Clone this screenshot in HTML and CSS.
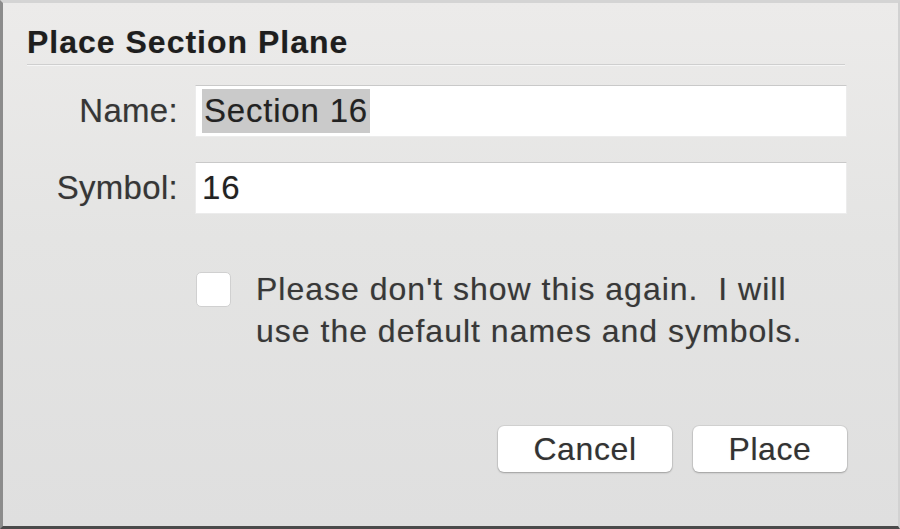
FILE: index.html
```html
<!DOCTYPE html>
<html lang="en">
<head>
  <meta charset="UTF-8">
  <title>Place Section Plane</title>
  <link rel="stylesheet" href="styles.css">
</head>
<body>

  <div class="dialog">
    <h1 class="title">Place Section Plane</h1>

    <!-- Name / Symbol fields -->
    <div class="fields">
      <label class="label">Name:</label>
      <div class="field"><span class="selected">Section 16</span></div>

      <label class="label">Symbol:</label>
      <div class="field">16</div>
    </div>

    <div class="check-row">
      <span class="checkbox"></span>
      <p class="check-text">Please don't show this again.&nbsp; I will<br>use the default names and symbols.</p>
    </div>

    <div class="buttons">
      <button class="btn btn-cancel">Cancel</button>
      <button class="btn btn-place">Place</button>
    </div>
  </div>

</body>
</html>
```

FILE: styles.css
```css
body {
  margin: 0;
  font-family: "Liberation Sans", Arial, sans-serif;
  background: #555;
}
.dialog {
  box-sizing: border-box;
  width: 900px;
  height: 529px;
  padding: 21px 51px 0 24px;
  background: linear-gradient(#ecebea, #e4e4e3 45%, #dfdfdf);
  border-top: 3px solid #d4d4d4;
  border-left: 3px solid #8c8c8c;
  border-right: 2px solid #d2d2d2;
  border-bottom: 3px solid #4a4a4a;
  color: #333;
  text-shadow: 0 0 1px rgba(0, 0, 0, 0.25);
}
.title {
  margin: 0 2px 0 0;
  padding-bottom: 4px;
  font-size: 32px;
  line-height: 36px;
  letter-spacing: 1px;
  font-weight: bold;
  color: #1e1e1e;
  border-bottom: 1px solid #cfcfcf;
  box-shadow: 0 1px 0 #f6f6f6;
}
.fields {
  display: grid;
  grid-template-columns: 151px 1fr;
  column-gap: 17px;
  row-gap: 25px;
  margin-top: 20px;
  align-items: center;
}
.label {
  text-align: right;
  font-size: 33px;
  letter-spacing: 0.3px;
  color: #363636;
}
.field {
  height: 52px;
  box-sizing: border-box;
  padding: 3px 0 0 6px;
  background: #fff;
  border: 1px solid #ececec;
  border-top-color: #c9c9c9;
  font-size: 33px;
  line-height: 44px;
  letter-spacing: 0.8px;
  color: #222;
}
.selected {
  display: inline-block;
  padding: 0 2px;
  background: #cacaca;
}
.check-row {
  display: flex;
  align-items: flex-start;
  gap: 25px;
  margin: 54px 0 0 169px;
}
.checkbox {
  flex: none;
  width: 33px;
  height: 33px;
  margin-top: 4px;
  background: #fff;
  border: 1px solid #d0d0d0;
  border-radius: 5px;
}
.check-text {
  margin: 0;
  font-size: 32px;
  line-height: 42px;
  letter-spacing: 1px;
  color: #383838;
}
.buttons {
  display: flex;
  justify-content: flex-end;
  gap: 21px;
  margin-top: 74px;
}
.btn {
  height: 46px;
  padding: 0;
  background: #fff;
  border: none;
  border-radius: 6px;
  box-shadow: 0 1px 2px rgba(0, 0, 0, 0.25), 0 0 0 1px rgba(0, 0, 0, 0.06);
  font-family: inherit;
  font-size: 32px;
  letter-spacing: 0.6px;
  color: #333;
  text-shadow: inherit;
}
.btn-cancel {
  width: 174px;
}
.btn-place {
  width: 154px;
}
```
